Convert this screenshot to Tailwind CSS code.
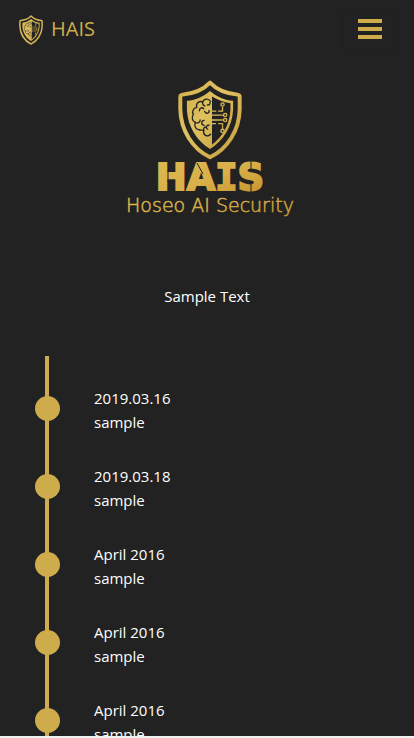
<!DOCTYPE html>
<html lang="en">
<head>
<meta charset="utf-8">
<meta name="viewport" content="width=device-width, initial-scale=1">
<title>HAIS</title>
<script src="https://cdn.jsdelivr.net/npm/@tailwindcss/browser@4"></script>
</head>
<body class="bg-[#222] text-white font-['Open_Sans','Noto_Sans',sans-serif] text-[15px] leading-6">
<svg class="absolute size-0" aria-hidden="true">
  <defs>
    <linearGradient id="gold" x1="0" y1="0" x2="1" y2="1">
      <stop offset="0" stop-color="#d4b04a"/>
      <stop offset=".4" stop-color="#dfc160"/>
      <stop offset="1" stop-color="#c69d3c"/>
    </linearGradient>
    <linearGradient id="goldText" x1="0" y1="0" x2="1" y2="1">
      <stop offset="0" stop-color="#dcb950"/>
      <stop offset=".5" stop-color="#d9b04a"/>
      <stop offset="1" stop-color="#c4922c"/>
    </linearGradient>
    <symbol id="shield" viewBox="38 28 194 242">
      <path fill="none" stroke="url(#gold)" stroke-width="12" stroke-linejoin="round" d="M135 36C118 54 87 69 52 72C45 73 45 75 45 82V116C46 180 82 237 135 262C188 237 224 180 225 116V82C225 75 225 73 218 72C183 69 152 54 135 36Z"/>
      <path fill="url(#gold)" fill-rule="evenodd" d="M135 61C118 76 94 88 65 91V118C67 168 95 213 135 237C175 213 203 168 205 118V91C176 88 152 76 135 61ZM141 78C158 88 177 96 197 98V119C195 162 173 201 141 224Z"/>
      <g fill="none" stroke="#222" stroke-width="4" stroke-linecap="round" stroke-linejoin="round">
        <path d="M137 93C131 82 116 84 113 94C101 90 91 100 95 111C84 113 79 125 85 132C78 140 81 153 90 156C87 167 91 177 101 178C106 181 112 178 116 181C113 194 126 203 137 192"/>
        <path d="M113 94C111 99 114 105 120 106M127 103C132 105 136 101 135 96M103 121C102 113 111 109 116 115M119 123C123 132 134 129 132 120M90 156C97 160 106 157 105 149M117 150C108 151 107 163 117 165M132 165C123 164 121 174 128 177M116 181C114 175 118 170 121 171"/>
      </g>
      <g fill="none" stroke="url(#gold)" stroke-width="4">
        <path d="M137 122H154M160 122H173V109M137 134H174M137 149H174M137 160H153M160 160H173V176"/>
        <circle cx="173" cy="102" r="5"/><circle cx="181" cy="134" r="5"/><circle cx="181" cy="149" r="5"/><circle cx="173" cy="182" r="5"/>
      </g>
    </symbol>
  </defs>
</svg>
<div class="h-screen overflow-hidden border-b-2 border-[#f0f0f0]">
  <header class="flex items-center justify-between pl-[19px] pr-4 pt-[10px]">
    <a href="#" class="flex items-center gap-2 text-[20px] text-[#cfac4b]">
      <svg class="h-[30px] w-6" aria-hidden="true"><use href="#shield"/></svg>
      <span class="pb-0.5">HAIS</span>
    </a>
    <button type="button" aria-label="Open menu" class="flex h-10 w-14 flex-col items-center justify-center gap-1 rounded border border-[#1f1f1f] pb-0.5">
      <span class="h-1 w-6 bg-[#cfac4b]"></span>
      <span class="h-1 w-6 bg-[#cfac4b]"></span>
      <span class="h-1 w-6 bg-[#cfac4b]"></span>
    </button>
  </header>
  <main>
    <section class="flex flex-col items-center pt-[30px]">
      <div class="flex flex-col items-center pl-[6px]">
        <svg class="h-20 w-16" aria-hidden="true"><use href="#shield"/></svg>
        <svg class="h-[64px] w-[180px] overflow-visible" viewBox="0 0 180 64" role="img" aria-label="HAIS Hoseo AI Security">
          <text x="90" y="30" text-anchor="middle" font-family="DejaVu Sans" font-weight="700" font-size="37" fill="url(#goldText)" stroke="url(#goldText)" stroke-width="2">HA<tspan font-family="DejaVu Sans Mono">I</tspan>S</text>
          <path d="M48 11V22M77 3L83 14M131 1V9M131 23V32" fill="none" stroke="#222" stroke-width="1"/>
          <text x="90" y="52" text-anchor="middle" font-family="DejaVu Sans" font-weight="200" font-size="19" fill="url(#goldText)" stroke="url(#goldText)" stroke-width=".5">Hoseo AI Security</text>
        </svg>
      </div>
      <p class="pt-[60px]">Sample Text</p>
    </section>
    <section class="mt-12 pl-[45px]">
      <ul class="flex flex-col gap-[30px] border-l-4 border-[#cfac4b] py-[30px] pl-[45px]">
        <li class="relative"><span class="absolute top-[10px] -left-[59px] size-[25px] rounded-full bg-[#cfac4b]"></span><p>2019.03.16</p><p>sample</p></li>
        <li class="relative"><span class="absolute top-[10px] -left-[59px] size-[25px] rounded-full bg-[#cfac4b]"></span><p>2019.03.18</p><p>sample</p></li>
        <li class="relative"><span class="absolute top-[10px] -left-[59px] size-[25px] rounded-full bg-[#cfac4b]"></span><p>April 2016</p><p>sample</p></li>
        <li class="relative"><span class="absolute top-[10px] -left-[59px] size-[25px] rounded-full bg-[#cfac4b]"></span><p>April 2016</p><p>sample</p></li>
        <li class="relative"><span class="absolute top-[10px] -left-[59px] size-[25px] rounded-full bg-[#cfac4b]"></span><p>April 2016</p><p>sample</p></li>
      </ul>
    </section>
  </main>
</div>
</body>
</html>
